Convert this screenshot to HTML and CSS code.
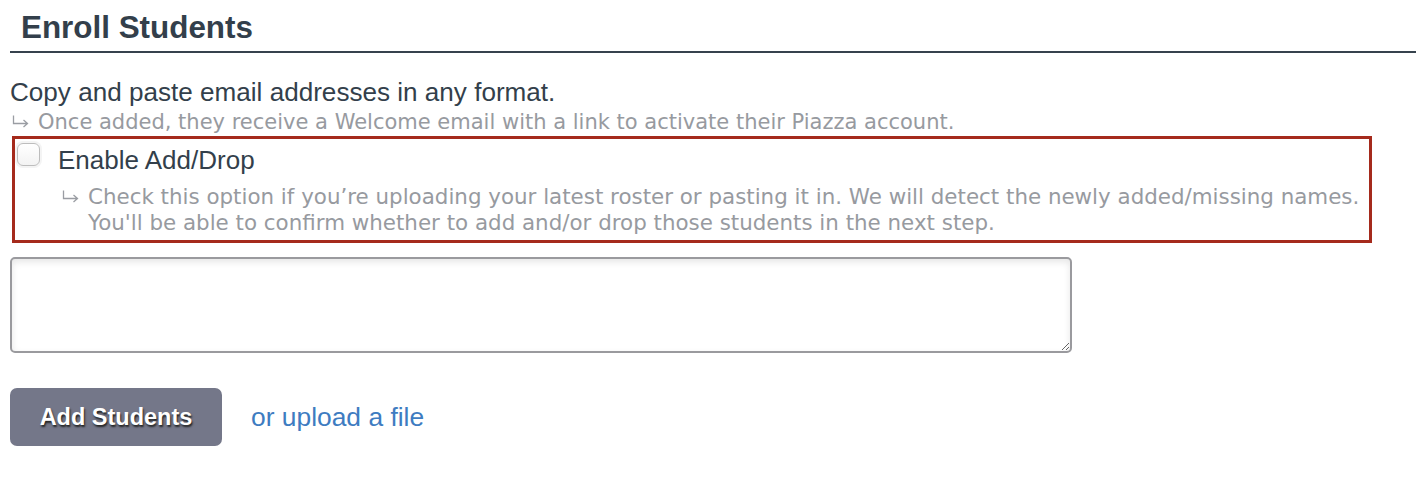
FILE: index.html
```html
<!DOCTYPE html>
<html>
<head>
<meta charset="utf-8">
<link rel="stylesheet" href="styles.css">
</head>
<body>
<div class="page">
  <h2 class="title">Enroll Students</h2>
  <p class="lead">Copy and paste email addresses in any format.</p>
  <div class="hint">
    <svg class="arrow" width="18" height="14" viewBox="0 0 18 14" aria-hidden="true"><path d="M1.5 0.5V8.5H15M11.5 5L15.5 8.5L11.5 12" fill="none" stroke="#9a9da3" stroke-width="1.3"/></svg>
    <span>Once added, they receive a Welcome email with a link to activate their Piazza account.</span>
  </div>
  <div class="adddrop">
    <label class="check-row">
      <span class="checkbox"></span>
      <span class="check-label">Enable Add/Drop</span>
    </label>
    <div class="sub-hint">
      <svg class="arrow" width="18" height="14" viewBox="0 0 18 14" aria-hidden="true"><path d="M1.5 0.5V8.5H15M11.5 5L15.5 8.5L11.5 12" fill="none" stroke="#9a9da3" stroke-width="1.3"/></svg>
      <div class="sub-text">Check this option if you’re uploading your latest roster or pasting it in. We will detect the newly added/missing names.<br>You'll be able to confirm whether to add and/or drop those students in the next step.</div>
    </div>
  </div>
  <textarea class="emails"></textarea>
  <div class="actions">
    <button class="btn">Add Students</button>
    <a class="upload" href="#">or upload a file</a>
  </div>
</div>
</body>
</html>
```

FILE: styles.css
```css
html, body {
  margin: 0;
  padding: 0;
  background: #ffffff;
}
body {
  font-family: "Liberation Sans", Arial, sans-serif;
  color: #333f4b;
}
.page {
  padding: 0 0 0 10px;
}
.title {
  margin: 0;
  padding: 10px 0 5px 11px;
  font-size: 31.4px;
  font-weight: bold;
  line-height: 36px;
  color: #333f4b;
  border-bottom: 2px solid #36424d;
}
.lead {
  margin: 24px 0 0 0;
  font-size: 26.1px;
  line-height: 30px;
  color: #333f4b;
}
.hint {
  display: flex;
  align-items: flex-start;
  gap: 8px;
  margin: 2px 0 0 0;
  padding-left: 2px;
  font-family: "DejaVu Sans", Verdana, sans-serif;
  font-size: 21px;
  line-height: 26px;
  color: #979aa0;
}
.arrow {
  flex: none;
  margin-top: 6px;
}
.adddrop {
  margin: 1px 0 0 2px;
  width: 1360px;
  height: 107px;
  border: 3px solid #a52a1c;
  box-sizing: border-box;
  padding: 6px 0 0 2px;
}
.check-row {
  display: flex;
  align-items: flex-start;
  gap: 18px;
}
.checkbox {
  flex: none;
  width: 23px;
  height: 23px;
  margin-top: -2px;
  border: 1px solid #bdbdbd;
  border-radius: 6px;
  background: linear-gradient(#ffffff, #f3f3f3);
  box-sizing: border-box;
  box-shadow: 0 0 0 2px #f4f4f4;
}
.check-label {
  font-size: 26px;
  line-height: 30px;
  color: #333f4b;
}
.sub-hint {
  display: flex;
  align-items: flex-start;
  gap: 8px;
  margin: 9px 0 0 45px;
  font-family: "DejaVu Sans", Verdana, sans-serif;
  font-size: 21.4px;
  line-height: 26px;
  color: #979aa0;
}
.emails {
  display: block;
  margin: 14px 0 0 0;
  width: 1062px;
  height: 96px;
  box-sizing: border-box;
  border: 2px solid #9a9a9e;
  border-radius: 5px;
  box-shadow: inset 0 3px 7px rgba(0,0,0,0.10);
  background: #ffffff;
  resize: vertical;
  font-family: "Liberation Sans", Arial, sans-serif;
}
.actions {
  display: flex;
  align-items: center;
  gap: 29px;
  margin-top: 35px;
}
.btn {
  width: 212px;
  height: 58px;
  border: none;
  border-radius: 7px;
  background: #747789;
  color: #ffffff;
  font-family: "Liberation Sans", Arial, sans-serif;
  font-size: 23.5px;
  font-weight: bold;
  text-shadow: 1px 2px 2px #222;
  padding: 0;
}
.upload {
  font-size: 26.4px;
  color: #3e7cc1;
  text-decoration: none;
}
```
